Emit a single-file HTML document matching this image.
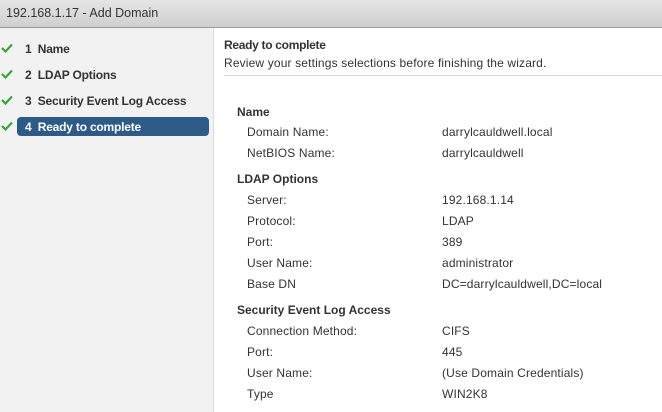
<!DOCTYPE html>
<html><head><style>
body{margin:0;width:662px;height:412px;overflow:hidden;font-family:"Liberation Sans",Arial,sans-serif;font-size:12px;color:#333;background:#fff;position:relative}
.t{position:absolute;left:0;top:0;width:662px;height:28px;background:linear-gradient(#e6e6e6,#cfcfcf);border-bottom:1px solid #999;box-sizing:border-box}
.t span{position:absolute;left:6px;top:6px;font-size:12.5px;color:#333}
.side{position:absolute;left:0;top:28px;width:213px;height:384px;background:#f2f2f2;border-right:1px solid #ddd}
.s{position:absolute;font-size:12px;color:#333;font-weight:bold;white-space:nowrap;letter-spacing:-0.2px}
.ck{position:absolute;left:1px;width:12px;height:10px}
.sel{position:absolute;left:17px;top:117px;width:192px;height:19px;background:#2d5a87;border-radius:4px}
.a{position:absolute;white-space:nowrap;letter-spacing:0.15px}
.h{font-weight:bold;letter-spacing:0}
</style></head><body>
<div class="t"><span>192.168.1.17 - Add Domain</span></div>
<div class="side"></div>
<svg class="ck" style="top:43px" viewBox="0 0 12 10"><path d="M1 5l3.5 3.5L11 1.5" stroke="#3aa33a" stroke-width="2.2" fill="none"/></svg>
<svg class="ck" style="top:69px" viewBox="0 0 12 10"><path d="M1 5l3.5 3.5L11 1.5" stroke="#3aa33a" stroke-width="2.2" fill="none"/></svg>
<svg class="ck" style="top:95px" viewBox="0 0 12 10"><path d="M1 5l3.5 3.5L11 1.5" stroke="#3aa33a" stroke-width="2.2" fill="none"/></svg>
<svg class="ck" style="top:121px" viewBox="0 0 12 10"><path d="M1 5l3.5 3.5L11 1.5" stroke="#3aa33a" stroke-width="2.2" fill="none"/></svg>
<div class="s" style="left:25px;top:42px">1&nbsp; Name</div>
<div class="s" style="left:25px;top:68px">2&nbsp; LDAP Options</div>
<div class="s" style="left:25px;top:94px">3&nbsp; Security Event Log Access</div>
<div class="sel"></div>
<div class="s" style="left:25px;top:120px;color:#fff">4&nbsp; Ready to complete</div>
<div class="a h" style="left:224px;top:38px;letter-spacing:-0.3px">Ready to complete</div>
<div class="a" style="left:224px;top:56px">Review your settings selections before finishing the wizard.</div>
<div style="position:absolute;left:224px;top:75px;width:438px;height:1px;background:#d4d4d4"></div>
<div class="a h" style="left:237px;top:105px">Name</div>
<div class="a" style="left:247px;top:125px">Domain Name:</div><div class="a" style="left:442px;top:125px">darrylcauldwell.local</div>
<div class="a" style="left:247px;top:146px">NetBIOS Name:</div><div class="a" style="left:442px;top:146px">darrylcauldwell</div>
<div class="a h" style="left:237px;top:172px">LDAP Options</div>
<div class="a" style="left:247px;top:193px">Server:</div><div class="a" style="left:442px;top:193px">192.168.1.14</div>
<div class="a" style="left:247px;top:214px">Protocol:</div><div class="a" style="left:442px;top:214px">LDAP</div>
<div class="a" style="left:247px;top:235px">Port:</div><div class="a" style="left:442px;top:235px">389</div>
<div class="a" style="left:247px;top:256px">User Name:</div><div class="a" style="left:442px;top:256px">administrator</div>
<div class="a" style="left:247px;top:277px">Base DN</div><div class="a" style="left:442px;top:277px">DC=darrylcauldwell,DC=local</div>
<div class="a h" style="left:237px;top:303px">Security Event Log Access</div>
<div class="a" style="left:247px;top:324px">Connection Method:</div><div class="a" style="left:442px;top:324px">CIFS</div>
<div class="a" style="left:247px;top:345px">Port:</div><div class="a" style="left:442px;top:345px">445</div>
<div class="a" style="left:247px;top:366px">User Name:</div><div class="a" style="left:442px;top:366px">(Use Domain Credentials)</div>
<div class="a" style="left:247px;top:387px">Type</div><div class="a" style="left:442px;top:387px">WIN2K8</div>
</body></html>
